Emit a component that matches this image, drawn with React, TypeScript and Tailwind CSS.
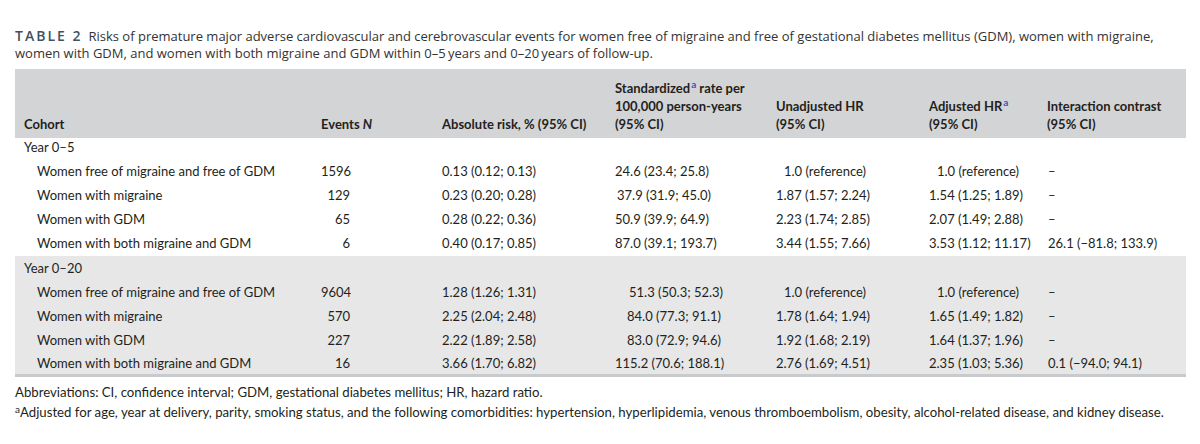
import React from "react";

type Row = {
  cohort: string;
  n: string;
  abs: string;
  rate: string;
  ratePad?: string;
  unadj: string;
  unadjPad?: string;
  adj: string;
  adjPad?: string;
  inter: string;
};

const sections: { label: string; shaded: boolean; rows: Row[] }[] = [
  {
    label: "Year 0–5",
    shaded: false,
    rows: [
      { cohort: "Women free of migraine and free of GDM", n: "1596", abs: "0.13 (0.12; 0.13)", rate: "24.6 (23.4; 25.8)", unadj: "1.0 (reference)", unadjPad: "pl-[14px]", adj: "1.0 (reference)", adjPad: "pl-[14px]", inter: "–" },
      { cohort: "Women with migraine", n: "129", abs: "0.23 (0.20; 0.28)", rate: "37.9 (31.9; 45.0)", ratePad: "pl-[8px]", unadj: "1.87 (1.57; 2.24)", adj: "1.54 (1.25; 1.89)", inter: "–" },
      { cohort: "Women with GDM", n: "65", abs: "0.28 (0.22; 0.36)", rate: "50.9 (39.9; 64.9)", unadj: "2.23 (1.74; 2.85)", adj: "2.07 (1.49; 2.88)", inter: "–" },
      { cohort: "Women with both migraine and GDM", n: "6", abs: "0.40 (0.17; 0.85)", rate: "87.0 (39.1; 193.7)", unadj: "3.44 (1.55; 7.66)", adj: "3.53 (1.12; 11.17)", inter: "26.1 (−81.8; 133.9)" },
    ],
  },
  {
    label: "Year 0–20",
    shaded: true,
    rows: [
      { cohort: "Women free of migraine and free of GDM", n: "9604", abs: "1.28 (1.26; 1.31)", rate: "51.3 (50.3; 52.3)", ratePad: "pl-[20px]", unadj: "1.0 (reference)", unadjPad: "pl-[14px]", adj: "1.0 (reference)", adjPad: "pl-[14px]", inter: "–" },
      { cohort: "Women with migraine", n: "570", abs: "2.25 (2.04; 2.48)", rate: "84.0 (77.3; 91.1)", ratePad: "pl-[18px]", unadj: "1.78 (1.64; 1.94)", adj: "1.65 (1.49; 1.82)", inter: "–" },
      { cohort: "Women with GDM", n: "227", abs: "2.22 (1.89; 2.58)", rate: "83.0 (72.9; 94.6)", ratePad: "pl-[18px]", unadj: "1.92 (1.68; 2.19)", adj: "1.64 (1.37; 1.96)", inter: "–" },
      { cohort: "Women with both migraine and GDM", n: "16", abs: "3.66 (1.70; 6.82)", rate: "115.2 (70.6; 188.1)", unadj: "2.76 (1.69; 4.51)", adj: "2.35 (1.03; 5.36)", inter: "0.1 (−94.0; 94.1)" },
    ],
  },
];

const cols = "grid grid-cols-[300px_121px_173px_161px_153px_118px_145px]";

const Sup = () => (
  <span className="text-[10px] leading-none text-[#3557c9] font-bold ml-px align-[5px]">a</span>
);

export default function App() {
  return (
    <div className="w-[1200px] h-[444px] bg-white px-[15px] pt-[27px] text-[#231f20]">
      <p className="text-[13px] leading-[17px] font-['Open_Sans',sans-serif] text-[#333]">
        <span className="inline-block text-[14px] leading-[17px] tracking-[2px] text-[#3f5262] font-semibold mr-[6px]">
          TABLE 2
        </span>
        Risks of premature major adverse cardiovascular and cerebrovascular events for women free of migraine and free of gestational diabetes mellitus (GDM), women with migraine, women with GDM, and women with both migraine and GDM within 0–5&#8201;years and 0–20&#8201;years of follow-up.
      </p>

      <div className="mt-[7px] w-[1171px] font-['Lato',sans-serif] text-[13px]">
        <div className={`${cols} h-[69px] bg-[#d3d4d6] items-end pb-[5px] font-bold leading-[18px]`}>
          <div className="pl-[9px]">Cohort</div>
          <div className="pl-[6px]">
            Events <span className="italic">N</span>
          </div>
          <div className="pl-[6px]">Absolute risk, % (95% CI)</div>
          <div className="pl-[6px]">
            <div>
              Standardized
              <Sup /> rate per
            </div>
            <div>100,000 person-years</div>
            <div>(95% CI)</div>
          </div>
          <div className="pl-[6px]">
            <div>Unadjusted HR</div>
            <div>(95% CI)</div>
          </div>
          <div className="pl-[6px]">
            <div>
              Adjusted HR
              <Sup />
            </div>
            <div>(95% CI)</div>
          </div>
          <div className="pl-[6px]">
            <div>Interaction contrast</div>
            <div>(95% CI)</div>
          </div>
        </div>

        {sections.map((s) => (
          <div key={s.label} className={s.shaded ? "bg-[#e7e7e8]" : ""}>
            <div
              className={`flex pl-[9px] ${s.shaded ? "h-[25px] items-center" : "h-[22px] items-start leading-[18px]"}`}
            >
              {s.label}
            </div>
            {s.rows.map((r, i) => (
              <div
                key={r.cohort}
                className={`${cols} items-center ${i === 3 && s.shaded ? "h-[21px]" : "h-[24px]"}`}
              >
                <div className="pl-[22px]">{r.cohort}</div>
                <div className="pl-[6px]">
                  <span className="inline-block w-[29px] text-right">{r.n}</span>
                </div>
                <div className="pl-[6px]">{r.abs}</div>
                <div className={r.ratePad ?? "pl-[6px]"}>{r.rate}</div>
                <div className={r.unadjPad ?? "pl-[6px]"}>{r.unadj}</div>
                <div className={r.adjPad ?? "pl-[6px]"}>{r.adj}</div>
                <div className="pl-[7px]">{r.inter}</div>
              </div>
            ))}
          </div>
        ))}
        <div className="h-[3px] bg-[#c9cacc]" />
      </div>

      <div className="mt-[5px] font-['Lato',sans-serif] text-[13.2px] leading-[20px] text-[#231f20]">
        <p>Abbreviations: CI, confidence interval; GDM, gestational diabetes mellitus; HR, hazard ratio.</p>
        <p>
          <span className="text-[10px] align-[4px] leading-none">a</span>Adjusted for age, year at delivery, parity, smoking status, and the following comorbidities: hypertension, hyperlipidemia, venous thromboembolism, obesity, alcohol-related disease, and kidney disease.
        </p>
      </div>
    </div>
  );
}
